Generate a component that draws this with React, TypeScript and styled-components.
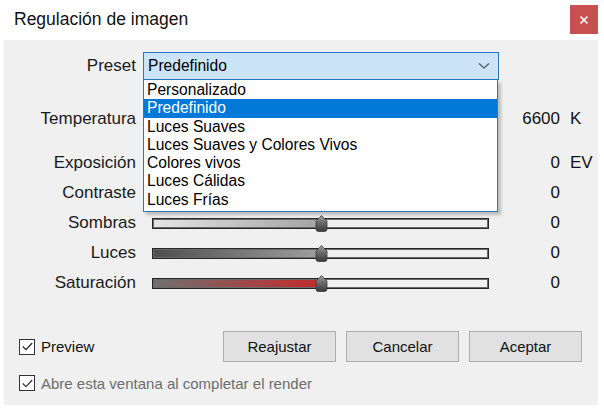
import React from 'react';
import styled, { createGlobalStyle } from 'styled-components';

const GlobalStyle = createGlobalStyle`
  html, body {
    margin: 0;
    padding: 0;
    background: #ffffff;
  }
  body {
    font-family: "Liberation Sans", Arial, sans-serif;
    color: #1a1a1a;
  }
`;

interface SliderDef {
  label: string;
  value: string;
  unit?: string;
  pos: number;
  fill: string;
  top: number;
}

const sliders: SliderDef[] = [
  { label: 'Temperatura', value: '6600', unit: 'K', pos: 50, fill: 'linear-gradient(90deg, #5b8fd6, #e0a050)', top: 24 },
  { label: 'Exposición', value: '0', unit: 'EV', pos: 50, fill: 'linear-gradient(90deg, #303030, #a0a0a0)', top: 14 },
  { label: 'Contraste', value: '0', pos: 50, fill: 'linear-gradient(90deg, #808080, #b0b0b0)', top: 0 },
  { label: 'Sombras', value: '0', pos: 50, fill: 'linear-gradient(90deg, #e4e4e4, #a2a2a2)', top: 0 },
  { label: 'Luces', value: '0', pos: 50, fill: 'linear-gradient(90deg, #4e4e4e, #a0a0a0)', top: 0 },
  { label: 'Saturación', value: '0', pos: 50, fill: 'linear-gradient(90deg, #707070, #c42a2a)', top: 0 },
];

const presets = [
  'Personalizado',
  'Predefinido',
  'Luces Suaves',
  'Luces Suaves y Colores Vivos',
  'Colores vivos',
  'Luces Cálidas',
  'Luces Frías',
];

/** Ventana de regulación de imagen */
const App: React.FC = () => {
  return (
    <>
      <GlobalStyle />
      <Window>
        <TitleBar>
          <Title>Regulación de imagen</Title>
          <CloseButton>
            <svg width="10" height="10" viewBox="0 0 10 10">
              <path d="M1.5 1.5 L8.5 8.5 M8.5 1.5 L1.5 8.5" stroke="#fff" strokeWidth="1.6" />
            </svg>
          </CloseButton>
        </TitleBar>
        <Client>
          <Row $height={28} $top={0}>
            <Label>Preset</Label>
            <ComboWrap>
              <Combo>
                <ComboText>Predefinido</ComboText>
                <svg width="12" height="8" viewBox="0 0 12 8">
                  <path d="M1 1.5 L6 6 L11 1.5" fill="none" stroke="#555" strokeWidth="1.2" />
                </svg>
              </Combo>
              <DropList>
                {presets.map((p) => (
                  <DropItem key={p} $selected={p === 'Predefinido'}>
                    {p}
                  </DropItem>
                ))}
              </DropList>
            </ComboWrap>
          </Row>
          {sliders.map((s) => (
            <Row key={s.label} $height={30} $top={s.top}>
              <Label>{s.label}</Label>
              <Track>
                <Fill $pos={s.pos} $fill={s.fill} />
                <Thumb $pos={s.pos}>
                  <svg width="13" height="17" viewBox="0 0 13 17">
                    <defs>
                      <linearGradient id={`th-${s.label}`} x1="0" y1="0" x2="0" y2="1">
                        <stop offset="0" stopColor="#a0a0a0" />
                        <stop offset="0.45" stopColor="#6a6a6a" />
                        <stop offset="1" stopColor="#3a3a3a" />
                      </linearGradient>
                    </defs>
                    <path
                      d="M6.5 0.5 Q8 2 12 6 L12 14 Q12 16.5 9.5 16.5 L3.5 16.5 Q1 16.5 1 14 L1 6 Q5 2 6.5 0.5 Z"
                      fill={`url(#th-${s.label})`}
                      stroke="#3a3a3a"
                      strokeWidth="0.8"
                    />
                  </svg>
                </Thumb>
              </Track>
              <Value>{s.value}</Value>
              <Unit>{s.unit}</Unit>
            </Row>
          ))}
          <Footer>
            <FooterRow>
              <Check>
                <CheckBox>
                  <svg width="11" height="9" viewBox="0 0 11 9">
                    <path d="M0.8 4.5 L4 7.6 L10.2 1" fill="none" stroke="#222" strokeWidth="1.2" />
                  </svg>
                </CheckBox>
                <CheckLabel $disabled={false}>Preview</CheckLabel>
              </Check>
              <Buttons>
                <Button>Reajustar</Button>
                <Button>Cancelar</Button>
                <Button>Aceptar</Button>
              </Buttons>
            </FooterRow>
            <Check>
              <CheckBox>
                <svg width="11" height="9" viewBox="0 0 11 9">
                  <path d="M0.8 4.5 L4 7.6 L10.2 1" fill="none" stroke="#333" strokeWidth="1.2" />
                </svg>
              </CheckBox>
              <CheckLabel $disabled>Abre esta ventana al completar el render</CheckLabel>
            </Check>
          </Footer>
        </Client>
      </Window>
    </>
  );
};

// styles
const Window = styled.div`
  width: 604px;
  height: 412px;
  display: flex;
  flex-direction: column;
  background: #fff;
  overflow: hidden;
`;

const TitleBar = styled.div`
  height: 40px;
  flex: none;
  display: flex;
  justify-content: space-between;
  align-items: flex-start;
`;

const Title = styled.div`
  padding: 9px 0 0 14px;
  font-size: 17.5px;
  color: #111;
`;

const CloseButton = styled.div`
  margin: 5px 6px 0 0;
  width: 28px;
  height: 29px;
  background: #c75050;
  display: flex;
  align-items: center;
  justify-content: center;
`;

const Client = styled.div`
  flex: 1;
  margin: 0 6px 7px 4px;
  background: #f0f0f0;
  padding-top: 12px;
  display: flex;
  flex-direction: column;
`;

const Row = styled.div<{ $height: number; $top: number }>`
  display: flex;
  align-items: center;
  height: ${(p) => p.$height}px;
  margin-top: ${(p) => p.$top}px;
  font-size: 17px;
`;

const Label = styled.div`
  width: 132px;
  text-align: right;
  color: #1a1a1a;
`;

const ComboWrap = styled.div`
  position: relative;
  margin-left: 7px;
  width: 356px;
  height: 28px;
`;

const Combo = styled.div`
  box-sizing: border-box;
  height: 28px;
  border: 1px solid #2a77c0;
  background: #cce4f7;
  display: flex;
  align-items: center;
  justify-content: space-between;
  padding: 0 8px 0 4px;
`;

const ComboText = styled.span`
  font-size: 15.6px;
  color: #000;
`;

const DropList = styled.div`
  position: absolute;
  top: 28px;
  left: 0;
  width: 355px;
  box-sizing: border-box;
  border: 1px solid #2a77c0;
  border-top: none;
  background: #fff;
  padding: 1px 0 2px;
  box-shadow: 3px 3px 3px rgba(0, 0, 0, 0.22);
  z-index: 2;
`;

const DropItem = styled.div<{ $selected: boolean }>`
  height: 18.3px;
  line-height: 18.3px;
  padding-left: 3px;
  font-size: 15.6px;
  color: ${(p) => (p.$selected ? '#fff' : '#000')};
  background: ${(p) => (p.$selected ? '#0078d7' : 'transparent')};
`;

const Track = styled.div`
  position: relative;
  margin-left: 16px;
  width: 337px;
  height: 11px;
  box-sizing: border-box;
  border: 1px solid #262626;
  box-shadow: inset 0 0 0 1px #6a6a6a;
  background: #f0f0f0;
`;

const Fill = styled.div<{ $pos: number; $fill: string }>`
  position: absolute;
  left: 1px;
  top: 1px;
  bottom: 1px;
  width: ${(p) => p.$pos}%;
  background: ${(p) => p.$fill};
`;

const Thumb = styled.div<{ $pos: number }>`
  position: absolute;
  top: -4px;
  left: calc(${(p) => p.$pos}% - 6px);
  width: 13px;
  height: 17px;
  svg {
    display: block;
  }
`;

const Value = styled.div`
  width: 71px;
  text-align: right;
  color: #111;
`;

const Unit = styled.div`
  margin-left: 10px;
  color: #111;
`;

const Footer = styled.div`
  margin-top: auto;
  padding: 0 16px 14px 15px;
  display: flex;
  flex-direction: column;
  gap: 13px;
`;

const FooterRow = styled.div`
  display: flex;
  align-items: center;
  height: 31px;
`;

const Check = styled.div`
  display: flex;
  align-items: center;
  height: 16px;
  font-size: 15px;
`;

const CheckBox = styled.div`
  box-sizing: border-box;
  width: 16px;
  height: 16px;
  border: 1px solid #333;
  background: #fff;
  display: flex;
  align-items: center;
  justify-content: center;
`;

const CheckLabel = styled.span<{ $disabled: boolean }>`
  margin-left: 6px;
  color: ${(p) => (p.$disabled ? '#6d6d6d' : '#111')};
`;

const Buttons = styled.div`
  margin-left: auto;
  display: flex;
  gap: 10px;
`;

const Button = styled.button`
  width: 113px;
  height: 31px;
  box-sizing: border-box;
  border: 1px solid #adadad;
  background: #e1e1e1;
  font-family: "Liberation Sans", Arial, sans-serif;
  font-size: 15px;
  color: #111;
  padding: 0;
`;

export default App;
